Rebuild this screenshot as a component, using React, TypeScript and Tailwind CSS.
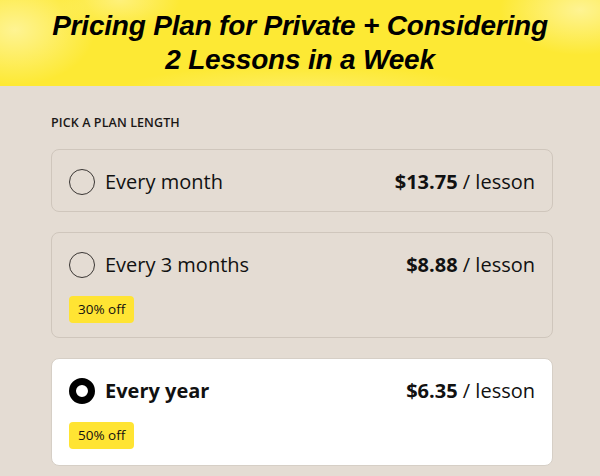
import React from "react";

type Plan = { id: string; label: string; price: string; badge?: string; selected?: boolean };

const plans: Plan[] = [
  { id: "m", label: "Every month", price: "$13.75" },
  { id: "q", label: "Every 3 months", price: "$8.88", badge: "30% off" },
  { id: "y", label: "Every year", price: "$6.35", badge: "50% off", selected: true },
];

function Radio({ on }: { on?: boolean }) {
  return on ? (
    <span className="w-[26px] h-[26px] rounded-full border-[7px] border-black bg-white shrink-0" />
  ) : (
    <span className="w-[26px] h-[26px] rounded-full border-[1.5px] border-[#3a3633] shrink-0" />
  );
}

export default function App() {
  return (
    <div className="w-[600px] h-[476px] overflow-hidden bg-[#e4dcd3] text-[#111]" style={{ fontFamily: "'Open Sans', 'Noto Sans', sans-serif" }}>
      {/* header */}
      <div className="h-[86px] flex flex-col items-center justify-center bg-[#fde934] bg-[radial-gradient(ellipse_80px_55px_at_15px_30px,rgba(255,246,170,0.8),transparent),radial-gradient(ellipse_60px_30px_at_120px_0px,rgba(255,246,170,0.6),transparent),radial-gradient(ellipse_80px_45px_at_580px_10px,rgba(255,246,170,0.8),transparent),radial-gradient(ellipse_180px_25px_at_300px_90px,rgba(255,246,170,0.4),transparent)]">
        <h1 className="font-bold italic text-black text-center tracking-[-0.2px] text-[28px] leading-[34px] font-['Liberation_Sans',Arial,sans-serif]">
          <span className="block">Pricing Plan for Private + Considering</span>
          <span className="block">2 Lessons in a Week</span>
        </h1>
      </div>

      <div className="pl-[51px] pr-[47px] pt-[28px]">
        <div className="text-[12.5px] font-semibold tracking-[0.1px] text-[#1a1716] mb-[16px]">PICK A PLAN LENGTH</div>
        <div className="flex flex-col gap-[20px]">
          {plans.map((p) => (
            <div
              key={p.id}
              className={
                "rounded-[8px] border px-[17px] pt-[17px] flex flex-col gap-[16px] " +
                (p.selected ? "bg-white border-[#d6cfc6] pb-[16px]" : "border-[#cfc6bc] pb-[14px]")
              }
            >
              <div className="flex items-center justify-between h-[30px]">
                <div className="flex items-center gap-[10px]">
                  <Radio on={p.selected} />
                  <span className={"text-[20px] " + (p.selected ? "font-bold" : "")}>{p.label}</span>
                </div>
                <div className="text-[20px]">
                  <span className="font-bold">{p.price}</span> / lesson
                </div>
              </div>
              {p.badge && (
                <div className="self-start bg-[#ffe433] rounded-[4px] px-[9px] h-[27px] flex items-center text-[13.5px]">
                  {p.badge}
                </div>
              )}
            </div>
          ))}
        </div>
      </div>
    </div>
  );
}
